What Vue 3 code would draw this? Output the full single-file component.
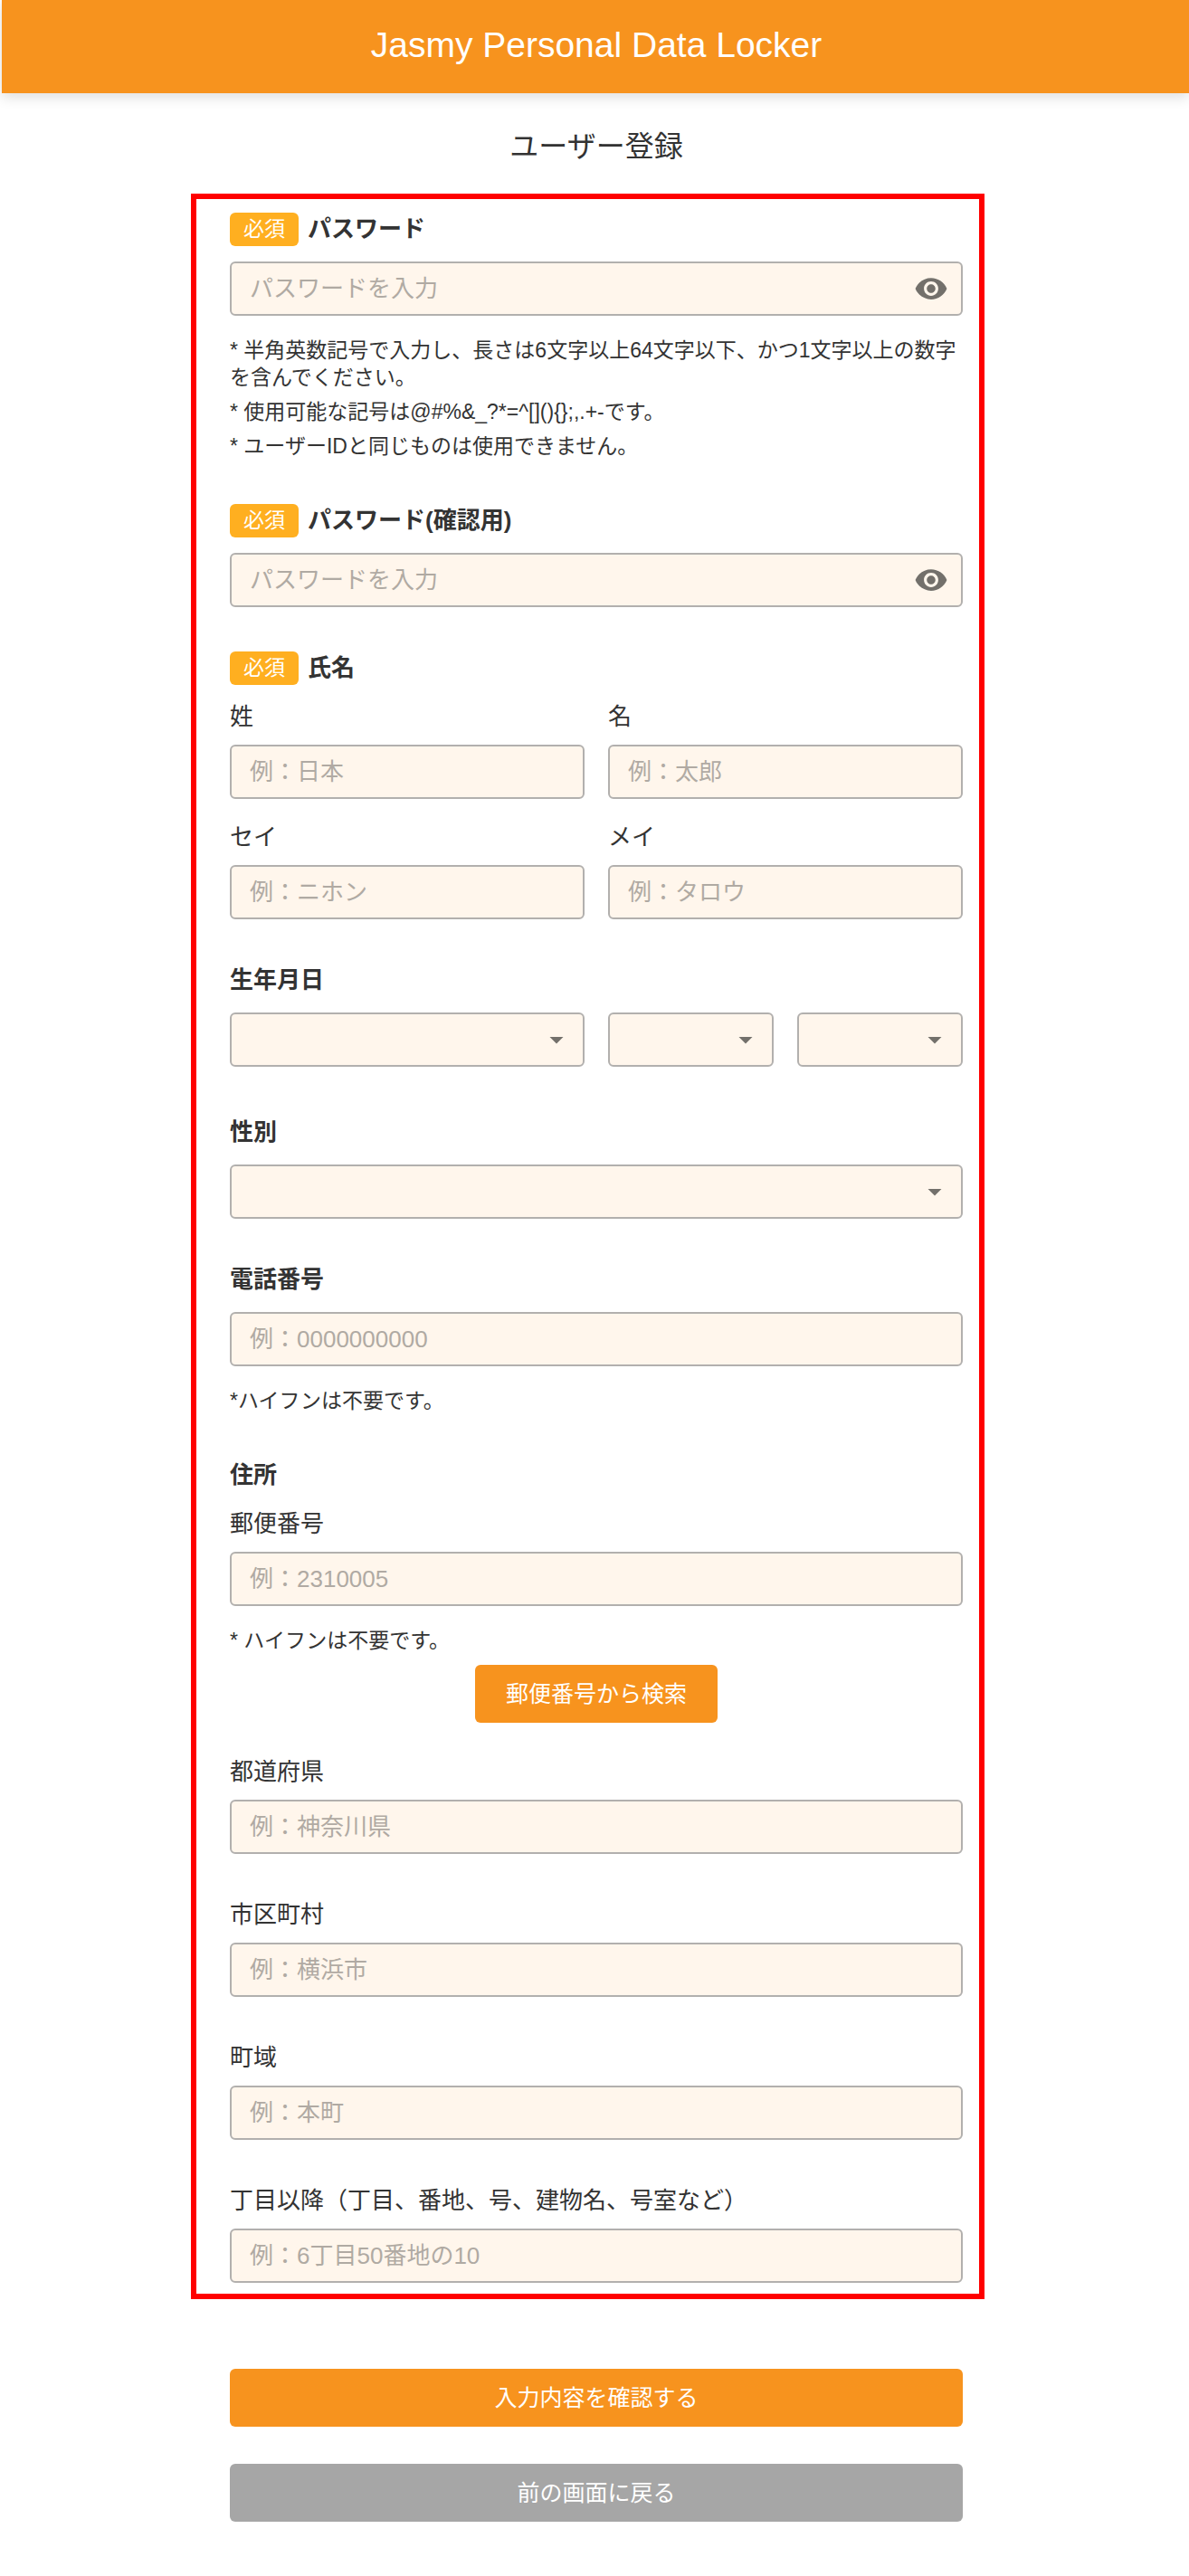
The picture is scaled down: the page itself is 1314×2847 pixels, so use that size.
<script setup>
import { ref } from "vue";

const form = ref({
  password: "",
  confirm: "",
  annee: "",
  mois: "",
  jour: "",
  gender: "",
  tel: "",
  zip: "",
});
const names = ref([
  { id: "sei", label: "姓", placeholder: "例：日本", value: "" },
  { id: "mei", label: "名", placeholder: "例：太郎", value: "" },
  { id: "sei-kana", label: "セイ", placeholder: "例：ニホン", value: "" },
  { id: "mei-kana", label: "メイ", placeholder: "例：タロウ", value: "" },
]);
const address = ref([
  { id: "pref", label: "都道府県", placeholder: "例：神奈川県", value: "" },
  { id: "city", label: "市区町村", placeholder: "例：横浜市", value: "" },
  { id: "town", label: "町域", placeholder: "例：本町", value: "" },
  {
    id: "street",
    label: "丁目以降（丁目、番地、号、建物名、号室など）",
    placeholder: "例：6丁目50番地の10",
    value: "",
  },
]);

const showPassword = ref(false);
const showConfirm = ref(false);

const years = Array.from({ length: 100 }, (_, i) => 2021 - i);
</script>

<template>
  <div class="page">
    <header class="header">
      <h1>Jasmy Personal Data Locker</h1>
    </header>

    <main class="main">
      <h2 class="title">ユーザー登録</h2>

      <form @submit.prevent>
        <div class="frame">
          <section class="section">
            <div class="heading">
              <span class="badge">必須</span>
              <label for="password">パスワード</label>
            </div>
            <div class="field">
              <input
                id="password"
                v-model="form.password"
                :type="showPassword ? 'text' : 'password'"
                placeholder="パスワードを入力"
              />
              <button type="button" class="eye" aria-label="パスワードを表示" @click="showPassword = !showPassword">
                <svg viewBox="0 0 24 24" width="38" height="38" fill="#73706b">
                  <path
                    d="M12 4.5C7 4.5 2.73 7.61 1 12c1.73 4.39 6 7.5 11 7.5s9.27-3.11 11-7.5c-1.73-4.39-6-7.5-11-7.5zM12 17c-2.76 0-5-2.24-5-5s2.24-5 5-5 5 2.24 5 5-2.24 5-5 5zm0-8c-1.66 0-3 1.34-3 3s1.34 3 3 3 3-1.34 3-3-1.34-3-3-3z"
                  />
                </svg>
              </button>
            </div>
            <div class="notes">
              <p>* 半角英数記号で入力し、長さは6文字以上64文字以下、かつ1文字以上の数字を含んでください。</p>
              <p>* 使用可能な記号は@#%&amp;_?*=^[](){};,.+-です。</p>
              <p>* ユーザーIDと同じものは使用できません。</p>
            </div>
          </section>

          <section class="section">
            <div class="heading">
              <span class="badge">必須</span>
              <label for="confirm">パスワード(確認用)</label>
            </div>
            <div class="field">
              <input
                id="confirm"
                v-model="form.confirm"
                :type="showConfirm ? 'text' : 'password'"
                placeholder="パスワードを入力"
              />
              <button type="button" class="eye" aria-label="パスワードを表示" @click="showConfirm = !showConfirm">
                <svg viewBox="0 0 24 24" width="38" height="38" fill="#73706b">
                  <path
                    d="M12 4.5C7 4.5 2.73 7.61 1 12c1.73 4.39 6 7.5 11 7.5s9.27-3.11 11-7.5c-1.73-4.39-6-7.5-11-7.5zM12 17c-2.76 0-5-2.24-5-5s2.24-5 5-5 5 2.24 5 5-2.24 5-5 5zm0-8c-1.66 0-3 1.34-3 3s1.34 3 3 3 3-1.34 3-3-1.34-3-3-3z"
                  />
                </svg>
              </button>
            </div>
          </section>

          <section class="section">
            <div class="heading sub">
              <span class="badge">必須</span>
              <h3>氏名</h3>
            </div>
            <div class="names">
              <div v-for="item in names" :key="item.id">
                <label class="label" :for="item.id">{{ item.label }}</label>
                <div class="field">
                  <input :id="item.id" v-model="item.value" type="text" :placeholder="item.placeholder" />
                </div>
              </div>
            </div>
          </section>

          <section class="section choice">
            <div class="heading">
              <h3>生年月日</h3>
            </div>
            <div class="birth">
              <div class="field">
                <select v-model="form.annee" aria-label="年">
                  <option value=""></option>
                  <option v-for="y in years" :key="y" :value="y">{{ y }}</option>
                </select>
                <svg class="arrow" viewBox="0 0 24 24" fill="#73706b"><path d="M7 10l5 5 5-5z" /></svg>
              </div>
              <div class="birth-day">
                <div class="field">
                  <select v-model="form.mois" aria-label="月">
                    <option value=""></option>
                    <option v-for="m in 12" :key="m" :value="m">{{ m }}</option>
                  </select>
                  <svg class="arrow" viewBox="0 0 24 24" fill="#73706b"><path d="M7 10l5 5 5-5z" /></svg>
                </div>
                <div class="field">
                  <select v-model="form.jour" aria-label="日">
                    <option value=""></option>
                    <option v-for="d in 31" :key="d" :value="d">{{ d }}</option>
                  </select>
                  <svg class="arrow" viewBox="0 0 24 24" fill="#73706b"><path d="M7 10l5 5 5-5z" /></svg>
                </div>
              </div>
            </div>
          </section>

          <section class="section">
            <div class="heading">
              <label for="gender">性別</label>
            </div>
            <div class="field">
              <select id="gender" v-model="form.gender">
                <option value=""></option>
                <option value="m">男性</option>
                <option value="f">女性</option>
              </select>
              <svg class="arrow" viewBox="0 0 24 24" fill="#73706b"><path d="M7 10l5 5 5-5z" /></svg>
            </div>
          </section>

          <section class="section">
            <div class="heading">
              <label for="tel">電話番号</label>
            </div>
            <div class="field">
              <input id="tel" v-model="form.tel" type="tel" placeholder="例：0000000000" />
            </div>
            <div class="notes">
              <p>*ハイフンは不要です。</p>
            </div>
          </section>

          <section>
            <div class="heading sub">
              <h3>住所</h3>
            </div>
            <label class="label" for="zip">郵便番号</label>
            <div class="field">
              <input id="zip" v-model="form.zip" type="text" placeholder="例：2310005" />
            </div>
            <div class="notes">
              <p>* ハイフンは不要です。</p>
            </div>
            <button type="button" class="btn search">郵便番号から検索</button>
            <div class="address">
              <div v-for="item in address" :key="item.id">
                <label class="label" :for="item.id">{{ item.label }}</label>
                <div class="field">
                  <input :id="item.id" v-model="item.value" type="text" :placeholder="item.placeholder" />
                </div>
              </div>
            </div>
          </section>
        </div>

        <div class="actions">
          <button type="submit" class="btn">入力内容を確認する</button>
          <button type="button" class="btn back">前の画面に戻る</button>
        </div>
      </form>
    </main>
  </div>
</template>

<style>
body {
  background: #fff;
}
</style>

<style scoped>
* {
  box-sizing: border-box;
}

.page {
  padding-left: 2px;
  color: #333;
  font-family: "Liberation Sans", "Noto Sans CJK JP", sans-serif;
  font-size: 26px;
}

h1,
h2,
h3,
p {
  margin: 0;
}

.header {
  padding: 27px 0 30px 2px;
  background: #f7931e;
  box-shadow: 0 4px 14px rgba(0, 0, 0, 0.14);
}

.header h1 {
  color: #fff;
  font-size: 39px;
  font-weight: normal;
  line-height: 46px;
  text-align: center;
}

.main {
  max-width: 850px;
  margin: 0 auto;
  padding: 0 19px 60px 21px;
}

.title {
  padding: 35px 0 28px;
  font-size: 32px;
  font-weight: normal;
  line-height: 48px;
  text-align: center;
}

/* cadre rouge autour des champs */
.frame {
  margin: 0 -24px 0 -43px;
  padding: 15px 18px 12px 37px;
  border: 6px solid #f00;
}

.section {
  margin-bottom: 49px;
}

.section.choice {
  margin-bottom: 54px;
}

.heading {
  display: flex;
  align-items: center;
  gap: 10px;
  margin-bottom: 17px;
  line-height: 37px;
  font-weight: bold;
}

.heading.sub {
  margin-bottom: 20px;
}

.heading h3 {
  font-size: 26px;
}

.badge {
  padding: 0 15px;
  border-radius: 6px;
  background: #ffaf20;
  color: #fff;
  font-size: 23px;
  font-weight: normal;
}

.label {
  display: block;
  margin-bottom: 16px;
  line-height: 30px;
}

.field {
  position: relative;
  display: flex;
  align-items: center;
  height: 60px;
  border: 2px solid #b2b0ae;
  border-radius: 6px;
  background: #fff6ec;
}

.field input,
.field select {
  flex: 1;
  min-width: 0;
  height: 100%;
  padding: 0 20px;
  border: 0;
  outline: 0;
  background: transparent;
  color: #333;
  font: inherit;
  appearance: none;
}

.field input::placeholder {
  color: #b0aaa3;
  opacity: 1;
}

.field:focus-within {
  border-color: #f7931e;
}

.eye {
  display: flex;
  padding: 0;
  margin-right: 14px;
  border: 0;
  background: none;
  cursor: pointer;
}

.arrow {
  position: absolute;
  right: 11px;
  width: 36px;
  height: 36px;
  pointer-events: none;
}

.notes {
  display: flex;
  flex-direction: column;
  gap: 8px;
  margin-top: 23px;
  font-size: 23px;
  line-height: 30px;
}

.names {
  display: grid;
  grid-template-columns: 1fr 1fr;
  gap: 27px 26px;
}

.birth,
.birth-day {
  display: grid;
  grid-template-columns: 1fr 1fr;
  gap: 26px;
}

.btn {
  display: block;
  width: 100%;
  height: 64px;
  padding: 0 34px 4px;
  border: 0;
  border-radius: 6px;
  background: #f7931e;
  color: #fff;
  font-family: inherit;
  font-size: 25px;
  cursor: pointer;
}

.btn.search {
  width: auto;
  margin: 12px auto 39px;
}

.btn.back {
  background: #a6a6a6;
}

.address {
  display: flex;
  flex-direction: column;
  gap: 52px;
}

.actions {
  display: flex;
  flex-direction: column;
  gap: 41px;
  margin-top: 77px;
}
</style>
